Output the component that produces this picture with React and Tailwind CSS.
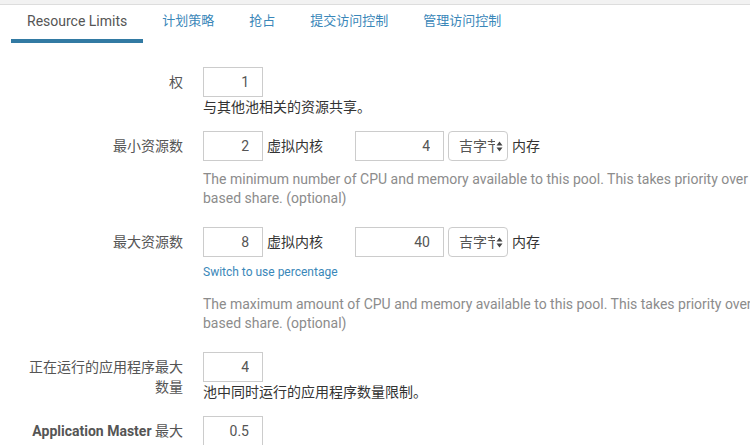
import React from "react";

const font = { fontFamily: "Roboto, 'Noto Sans CJK SC', sans-serif" };

function NumBox({ value, wide }) {
    return (
        <input
            type="text"
            readOnly
            value={value}
            className={`${wide ? "w-[89px]" : "w-[60px]"} h-[30px] border border-[#cccccc] bg-white pr-[13px] text-right text-[14px] text-[#555555] outline-none`}
        />
    );
}

function UnitSelect() {
    return (
        <div className="flex h-[30px] w-[60px] items-center rounded-[4px] border border-[#cccccc] bg-white pl-[10px] text-[14px] text-[#555555]">
            <span className="w-[36px] overflow-hidden whitespace-nowrap">吉字节</span>
            <svg width="7" height="11" viewBox="0 0 7 11" className="ml-[1px]">
                <path d="M3.5 0.5 L6.5 4.5 L0.5 4.5 Z" fill="#444" />
                <path d="M3.5 10.5 L6.5 6.5 L0.5 6.5 Z" fill="#444" />
            </svg>
        </div>
    );
}

function Row({ label, children, className }) {
    return (
        <div className={`flex ${className || ""}`}>
            <div className="w-[160px] shrink-0 pt-[5px] text-right text-[14px] leading-5 text-[#555555]">
                {label}
            </div>
            <div className="ml-5 min-w-0 flex-1">{children}</div>
        </div>
    );
}

function ResourceInputs({ cores, mem }) {
    return (
        <div className="flex items-center">
            <NumBox value={cores} />
            <span className="ml-1 text-[14px] text-[#333333]">虚拟内核</span>
            <div className="ml-[32px]">
                <NumBox value={mem} wide />
            </div>
            <div className="ml-1">
                <UnitSelect />
            </div>
            <span className="ml-1 text-[14px] text-[#333333]">内存</span>
        </div>
    );
}

function GrayHelp({ first }) {
    return (
        <div className="whitespace-nowrap text-[14px] leading-[19px] text-[#8c8c8c]">
            <div>{first} available to this pool. This takes priority over the weight-</div>
            <div>based share. (optional)</div>
        </div>
    );
}

export default function App() {
    const tabs = ["计划策略", "抢占", "提交访问控制", "管理访问控制"];

    return (
        <div className="h-[445px] w-[750px] overflow-hidden bg-white" style={font}>
            <div className="h-[5px] border-b border-[#dddddd] bg-[#f2f2f2]" />

            {/* tabs */}
            <div className="flex pl-[11px]">
                <div className="border-b-4 border-[#327aa3] px-4 pt-[6px] pb-[8px] text-[14px] leading-5 text-[#555555]">
                    Resource Limits
                </div>
                {tabs.map((t) => (
                    <div key={t} className="ml-[3px] px-4 pt-[6px] pb-[12px] text-[13px] leading-5 text-[#3a87b9]">
                        {t}
                    </div>
                ))}
            </div>

            {/* form */}
            <div className="pl-[23px] pt-[24px]">
                <Row label="权">
                    <NumBox value="1" />
                    <div className="text-[14px] leading-5 text-[#333333]">与其他池相关的资源共享。</div>
                </Row>

                <Row label="最小资源数" className="mt-[14px]">
                    <ResourceInputs cores="2" mem="4" />
                    <div className="mt-[9px]">
                        <GrayHelp first="The minimum number of CPU and memory" />
                    </div>
                </Row>

                <Row label="最大资源数" className="mt-[19px]">
                    <ResourceInputs cores="8" mem="40" />
                    <div className="pt-[6px] text-[12px] leading-[18px] text-[#3a87b9]">Switch to use percentage</div>
                    <div className="mt-[14px]">
                        <GrayHelp first="The maximum amount of CPU and memory" />
                    </div>
                </Row>

                <Row label="正在运行的应用程序最大数量" className="mt-[19px]">
                    <NumBox value="4" />
                    <div className="text-[14px] leading-5 text-[#333333]">池中同时运行的应用程序数量限制。</div>
                </Row>

                <Row
                    label={
                        <span>
                            <span className="font-bold">Application Master</span> 最大
                        </span>
                    }
                    className="mt-[14px]"
                >
                    <NumBox value="0.5" />
                </Row>
            </div>
        </div>
    );
}
